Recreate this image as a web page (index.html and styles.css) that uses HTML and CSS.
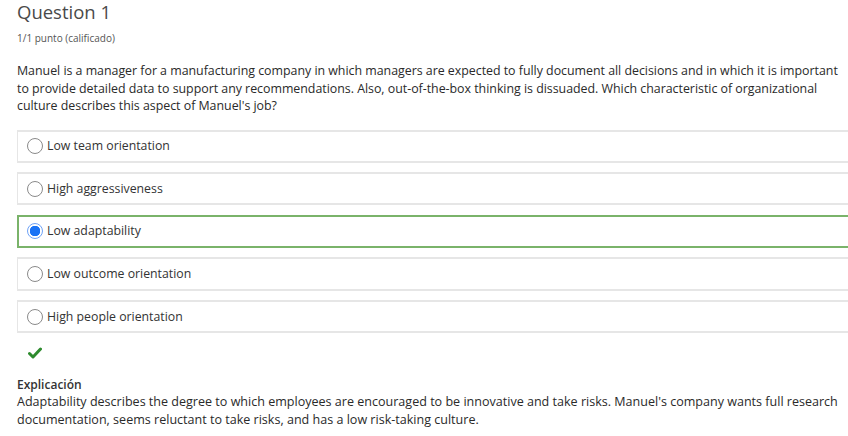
FILE: index.html
```html
<!DOCTYPE html>
<html>
<head>
<meta charset="utf-8">
<link rel="stylesheet" href="styles.css">
</head>
<body>
<div class="quiz">
  <h2 class="title">Question 1</h2>
  <div class="points">1/1 punto (calificado)</div>
  <p class="question">Manuel is a manager for a manufacturing company in which managers are expected to fully document all decisions and in which it is important to provide detailed data to support any recommendations. Also, out-of-the-box thinking is dissuaded. Which characteristic of organizational culture describes this aspect of Manuel's job?</p>
  <div class="options">
    <label class="option"><span class="radio"></span><span class="label">Low team orientation</span></label>
    <label class="option"><span class="radio"></span><span class="label">High aggressiveness</span></label>
    <label class="option selected"><span class="radio checked"></span><span class="label">Low adaptability</span></label>
    <label class="option"><span class="radio"></span><span class="label">Low outcome orientation</span></label>
    <label class="option"><span class="radio"></span><span class="label">High people orientation</span></label>
  </div>
  <div class="check">
    <svg width="14" height="12" viewBox="0 0 14 12"><path d="M1.5 6.5 L5 10 L12.5 2" fill="none" stroke="#2e8b2e" stroke-width="3" stroke-linecap="round" stroke-linejoin="round"/></svg>
  </div>
  <div class="explain">
    <div class="explain-title">Explicación</div>
    <p class="explain-text">Adaptability describes the degree to which employees are encouraged to be innovative and take risks. Manuel's company wants full research documentation, seems reluctant to take risks, and has a low risk-taking culture.</p>
  </div>
</div>
</body>
</html>
```

FILE: styles.css
```css
html, body {
  margin: 0;
  padding: 0;
  background: #ffffff;
}
body {
  font-family: "Open Sans", "Noto Sans", sans-serif;
  color: #333;
  width: 848px;
  height: 436px;
  overflow: hidden;
}
.quiz {
  padding: 0 0 0 17px;
}
.title {
  margin: 0;
  font-size: 18.5px;
  font-weight: 400;
  color: #4a4a4a;
  line-height: 24px;
}
.points {
  margin-top: 7px;
  font-size: 10px;
  line-height: 14px;
  color: #555;
}
.question {
  margin: 17px 0 0 0;
  font-size: 12.4px;
  line-height: 17.5px;
  letter-spacing: -0.02px;
  color: #2a2a2a;
  width: 826px;
}
.options {
  display: flex;
  flex-direction: column;
  gap: 9.3px;
  margin-top: 15px;
  margin-right: -20px;
}
.option {
  display: flex;
  align-items: center;
  height: 29.3px;
  border: 1px solid #e6e6e6;
  border-width: 2px 0 2px 1px;
  padding-left: 9px;
  font-size: 12.3px;
  color: #333;
}
.option.selected {
  border: 2px solid #7ab36a;
  border-right: none;
  padding-left: 8px;
}
.radio {
  width: 16px;
  height: 16px;
  border: 1px solid #8a8a8a;
  border-radius: 50%;
  box-sizing: border-box;
  margin-right: 4px;
  flex: none;
}
.radio.checked {
  border: 1px solid #6fa3f7;
  background: radial-gradient(circle, #1a73f5 0, #1a73f5 5px, #ffffff 5.5px);
}
.label {
  line-height: 16px;
}
.check {
  margin: 14px 0 0 11px;
  height: 12px;
}
.check svg {
  display: block;
}
.explain {
  margin-top: 18px;
}
.explain-title {
  font-size: 12px;
  font-weight: 600;
  color: #333;
  line-height: 16px;
}
.explain-text {
  margin: 0;
  font-size: 12.55px;
  line-height: 18px;
  color: #2a2a2a;
  width: 830px;
}
```
